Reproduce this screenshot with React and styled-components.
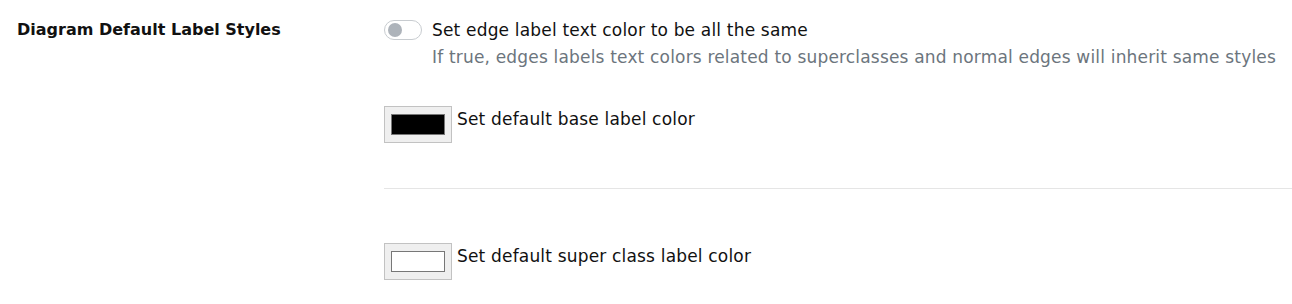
import React from 'react'
import styled, { createGlobalStyle } from 'styled-components'

const GlobalStyle = createGlobalStyle`
  body {
    margin: 0;
    background: #fff;
    font-family: 'DejaVu Sans', 'Liberation Sans', sans-serif;
    color: #212529;
  }
`

const Section = styled.div`
  display: grid;
  grid-template-columns: 367px 1fr;
  padding-left: 17px;
`

const Heading = styled.h3`
  margin: 18px 0 0;
  font-size: 16px;
  line-height: 24px;
  font-weight: bold;
  color: #111;
`

const Options = styled.div`
  display: flex;
  flex-direction: column;
  padding-top: 18px;
  font-size: 17px;
  letter-spacing: 0.18px;
`

const SwitchRow = styled.label`
  display: flex;
  align-items: center;
  gap: 10px;
  line-height: 24px;
  color: #111;
`

const Toggle = styled.span`
  display: inline-flex;
  align-items: center;
  box-sizing: border-box;
  width: 38px;
  height: 20px;
  padding: 0 3px;
  border: 1px solid #c8ccd0;
  border-radius: 10px;
  background: #fff;

  &::before {
    content: '';
    width: 14px;
    height: 14px;
    border-radius: 50%;
    background: #adb3ba;
  }
`

const Hint = styled.div`
  margin: 3px 0 0 48px;
  line-height: 24px;
  color: #6c757d;
`

const ColorRow = styled.div`
  display: flex;
  align-items: flex-start;
  gap: 5px;
  margin-top: ${p => p.$top}px;
`

const Swatch = styled.span`
  display: flex;
  box-sizing: border-box;
  width: 68px;
  height: 37px;
  padding: 7px 6px;
  border: 1px solid #c2c2c2;
  background: #efefef;

  &::after {
    content: '';
    flex: 1;
    border: 1px solid #777;
    background: ${p => p.$color};
  }
`

const ColorLabel = styled.span`
  line-height: 26px;
  color: #111;
`

const Divider = styled.hr`
  margin: 45px 0 0;
  border: 0;
  border-top: 1px solid #e5e5e5;
`

export default function App() {
  return (
    <>
      <GlobalStyle />
      <Section>
        <Heading>Diagram Default Label Styles</Heading>
        <Options>
          <SwitchRow>
            <Toggle />
            Set edge label text color to be all the same
          </SwitchRow>
          <Hint>
            If true, edges labels text colors related to superclasses and normal edges will inherit same styles
          </Hint>
          <ColorRow $top={37}>
            <Swatch $color='#000' />
            <ColorLabel>Set default base label color</ColorLabel>
          </ColorRow>
          <Divider />
          <ColorRow $top={54}>
            <Swatch $color='#fff' />
            <ColorLabel>Set default super class label color</ColorLabel>
          </ColorRow>
        </Options>
      </Section>
    </>
  )
}
